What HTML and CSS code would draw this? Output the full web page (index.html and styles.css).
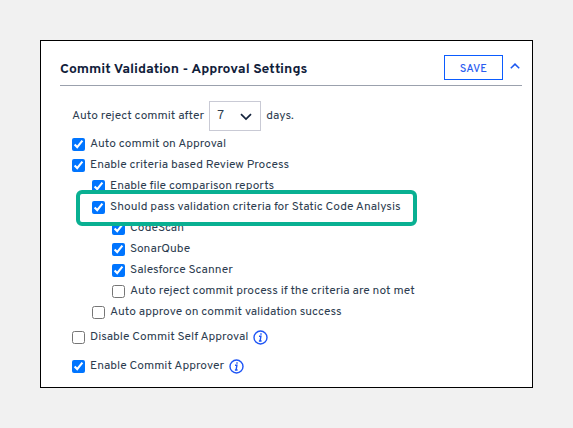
FILE: index.html
```html
<!DOCTYPE html>
<html lang="en">
<head>
<meta charset="utf-8">
<title>Commit Validation</title>
<link rel="stylesheet" href="styles.css">
</head>
<body>
<main class="card">
  <header class="head">
    <h1>Commit Validation - Approval Settings</h1>
    <button class="save" type="button">SAVE</button>
    <svg class="collapse" width="10" height="6" viewBox="0 0 10 6"><path d="M.8 5.2 5 1.1l4.2 4.1"/></svg>
  </header>
  <div class="days">
    <span>Auto reject commit after</span>
    <div class="select"><span>7</span><svg width="12" height="8" viewBox="0 0 12 8"><path d="M1 1.2 6 6.1l5-4.9"/></svg></div>
    <span>days.</span>
  </div>
  <div class="list">
    <label class="row"><input type="checkbox" checked><span>Auto commit on Approval</span></label>
    <label class="row"><input type="checkbox" checked><span>Enable criteria based Review Process</span></label>
    <label class="row l2"><input type="checkbox" checked><span>Enable file comparison reports</span></label>
    <label class="row l2 marked"><input type="checkbox" checked><span>Should pass validation criteria for Static Code Analysis</span></label>
    <label class="row l3"><input type="checkbox" checked><span>CodeScan</span></label>
    <label class="row l3"><input type="checkbox" checked><span>SonarQube</span></label>
    <label class="row l3"><input type="checkbox" checked><span>Salesforce Scanner</span></label>
    <label class="row l3"><input type="checkbox"><span>Auto reject commit process if the criteria are not met</span></label>
    <label class="row l2"><input type="checkbox"><span>Auto approve on commit validation success</span></label>
    <label class="row self"><input type="checkbox"><span>Disable Commit Self Approval</span><svg class="info" width="15" height="15" viewBox="0 0 15 15"><circle cx="7.5" cy="7.5" r="6.5"/><path d="M6 6.3h1.9L7.1 11M5.9 11h2.7M8 3.3v1.5"/></svg></label>
    <label class="row approver"><input type="checkbox" checked><span>Enable Commit Approver</span><svg class="info" width="15" height="15" viewBox="0 0 15 15"><circle cx="7.5" cy="7.5" r="6.5"/><path d="M6 6.3h1.9L7.1 11M5.9 11h2.7M8 3.3v1.5"/></svg></label>
  </div>
</main>
</body>
</html>
```
FILE: styles.css
```css
*, *::after { box-sizing: border-box; }
body {
  margin: 0;
  padding: 40px;
  height: 428px;
  background: #f1f1f1;
  font: 12px/21px Overpass, Roboto, sans-serif;
  color: #2d3d50;
}
.card {
  width: 493px;
  height: 348px;
  padding: 14px 10px 0 19px;
  background: #fff;
  border: 1px solid #000;
}
.head {
  display: flex;
  height: 31px;
  align-items: flex-start;
  border-bottom: 1px solid #9ba1ad;
}
h1 {
  flex: 1;
  margin: 4px 0 0;
  font-size: 14px;
  line-height: 21px;
  font-weight: 700;
  color: #10203a;
  white-space: nowrap;
}
.save {
  width: 59px;
  height: 25px;
  padding: 2px 0 0;
  border: 1px solid #0b5cff;
  background: #fff;
  color: #2a5cf0;
  font: 500 11px/20px Overpass, Roboto, sans-serif;
  letter-spacing: .2px;
}
.collapse {
  margin: 8px 2px 0 7px;
  fill: none;
  stroke: #1b57f0;
  stroke-width: 1.5;
}
.days {
  display: flex;
  align-items: center;
  height: 30px;
  margin: 15px 0 0 12px;
}
.select {
  display: flex;
  align-items: center;
  justify-content: space-between;
  width: 52px;
  height: 30px;
  margin: 0 5px 0 5px;
  padding: 1px 8px 0 7px;
  border: 1px solid #c9cad5;
  font-size: 13px;
}
.select svg {
  fill: none;
  stroke: #14243d;
  stroke-width: 1.7;
}
.list { padding: 3px 0 0 12px; }
.row {
  position: relative;
  display: flex;
  align-items: center;
  height: 21px;
  white-space: nowrap;
}
.row input {
  width: 13px;
  height: 13px;
  margin: 0 5px 0 0;
}
.l2 { padding-left: 20px; }
.l3 { padding-left: 40px; }
.self { margin-top: 4px; }
.approver { margin-top: 8px; }
.info {
  margin: 0 0 1px 5px;
  fill: none;
  stroke: #1e55f5;
  stroke-width: 1.4;
}
.marked::after {
  content: "";
  position: absolute;
  left: 4px;
  top: -7px;
  width: 341px;
  height: 36px;
  border: 4px solid #09b092;
  border-radius: 6px;
  z-index: 2;
}
```
